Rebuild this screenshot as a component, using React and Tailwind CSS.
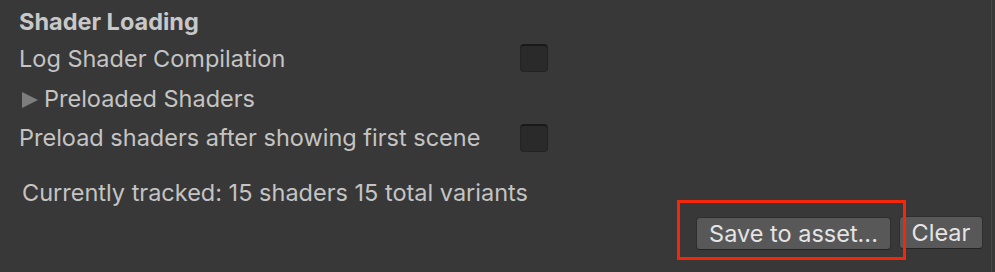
//
// ─── Unity Graphics settings : Shader Loading section ─────────────
//

import React from 'react'

function Checkbox() {
  return (
    <div className="w-[28px] h-[28px] rounded-[4px] bg-[#2a2a2a] border border-[#232323] border-t-[#191919] border-t-2" />
  )
}

function Button({ children, className = '' }) {
  return (
    <button
      className={`h-[33px] rounded-[4px] bg-[#585858] border border-[#2f2f2f] border-b-[#242424] text-[#e4e4e4] text-[23.5px] leading-none ${className}`}
    >
      {children}
    </button>
  )
}

export default function App() {
  return (
    <div
      className="w-[995px] h-[272px] bg-[#383838] text-[#c4c4c4] text-[23.5px] flex overflow-hidden"
      style={{ fontFamily: 'Inter, "Noto Sans", sans-serif' }}
    >
      <div className="w-[992px] pl-[19px] pt-[3px] border-r border-[#474747]">
        <div className="h-[37px] leading-[38px] font-bold text-[#c8c8c8]">Shader Loading</div>

        <div className="flex items-start h-[39px]">
          <div className="w-[501px] leading-[38px]">Log Shader Compilation</div>
          <div className="mt-[4px]">
            <Checkbox />
          </div>
        </div>

        <div className="flex items-center h-[40px] leading-[38px]">
          <svg width="16" height="16" viewBox="0 0 16 16" className="ml-[3px] mr-[6px] mt-[1px]">
            <polygon points="0,0 16,8 0,16" fill="#7e7e7e" />
          </svg>
          <span>Preloaded Shaders</span>
        </div>

        <div className="flex items-start h-[55px]">
          <div className="w-[501px] leading-[38px]">Preload shaders after showing first scene</div>
          <div className="mt-[5px]">
            <Checkbox />
          </div>
        </div>

        <div className="pl-[3px] leading-[38px] h-[42px]">
          Currently tracked: 15 shaders 15 total variants
        </div>

        <div className="flex justify-end gap-[8px] pr-[8px]">
          <div className="relative">
            <Button className="w-[195px]">Save to asset...</Button>
            <div className="absolute -left-[19px] -right-[15px] -top-[16px] -bottom-[9px] border-[3px] border-[#f4270b] pointer-events-none" />
          </div>
          <Button className="w-[84px]">Clear</Button>
        </div>
      </div>
    </div>
  )
}
